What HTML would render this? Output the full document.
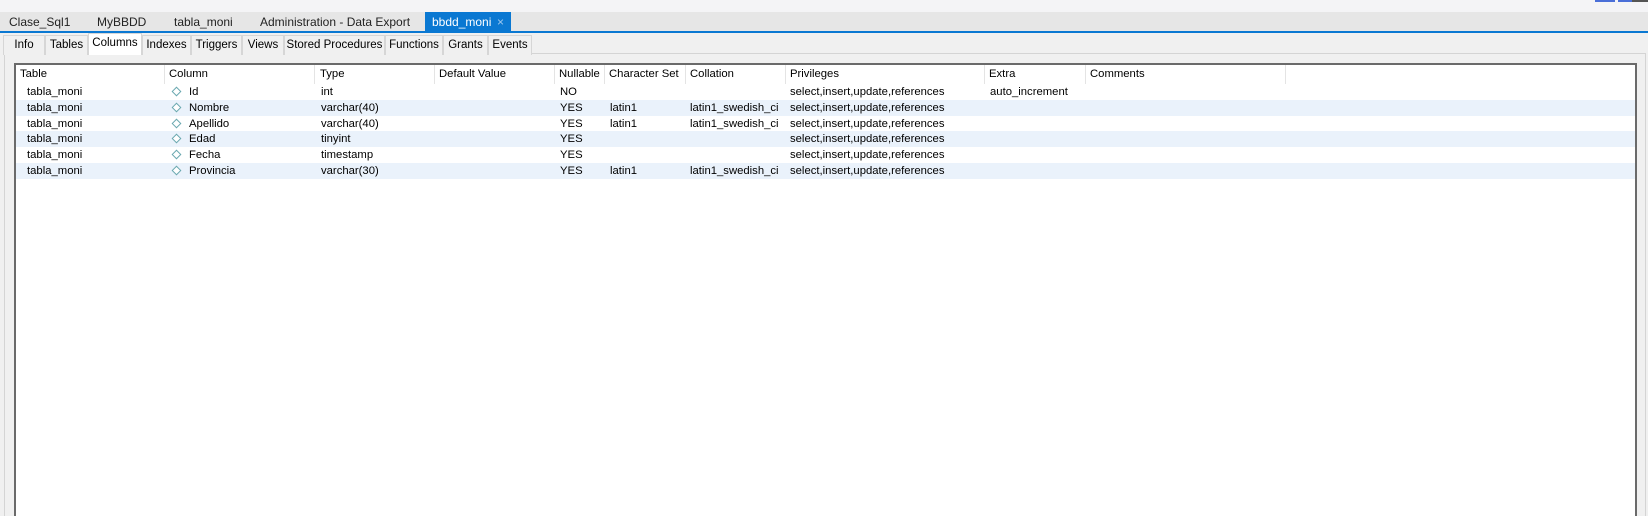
<!DOCTYPE html>
<html style="height:516px;overflow:hidden"><head><meta charset="utf-8"><style>
*{margin:0;padding:0;box-sizing:border-box}
body{width:1648px;height:516px;overflow:hidden;background:#f0f0f0;font-family:"Liberation Sans",sans-serif;font-size:12px;color:#000;position:relative}
.a{position:absolute;white-space:nowrap}
.top{left:0;top:0;width:1648px;height:12px;background:#f4f4f6}
.strip{left:0;top:12px;width:1648px;height:20px;background:#e6e6e6}
.blue{left:0;top:31px;width:1648px;height:2px;background:#0a78d2}
.tab{top:13px;line-height:18px;font-size:12px;color:#222}
.sub{top:35px;height:20px;line-height:18px;border:1px solid #d6d6d6;border-bottom:none;background:#f0f0f0;text-align:center;font-size:11.5px}
.panel{left:4px;top:53px;width:1642px;height:470px;border:1px solid #d4d4d4;background:#f0f0f0}
.grid{left:14px;top:63px;width:1623px;height:460px;border:2px solid #6a6a6a;border-bottom:none;background:#fff}
.sep{top:65px;width:1px;height:19px;background:#e4e4e4}
.row{left:16px;width:1619px;height:16px}
.c{line-height:16px;font-size:11.3px}
.dm{width:7px;height:7px;border:1px solid #6aa8b0;transform:rotate(45deg);background:#fff}
</style></head><body>
<div class="a top"></div>
<div class="a" style="left:1618px;top:0;width:20px;height:2px;background:#4a6fd8"></div>
<div class="a" style="left:1595px;top:0;width:20px;height:2px;background:#4a6fd8"></div>
<div class="a" style="left:1632px;top:0;width:16px;height:2px;background:#555"></div>
<div class="a strip"></div>
<div class="a" style="left:425px;top:12px;width:86px;height:20px;background:#0a78d2"></div>
<div class="a blue"></div>
<div class="a tab" style="left:9px">Clase_Sql1</div>
<div class="a tab" style="left:97px">MyBBDD</div>
<div class="a tab" style="left:174px">tabla_moni</div>
<div class="a tab" style="left:260px">Administration - Data Export</div>
<div class="a tab" style="left:432px;color:#fff">bbdd_moni</div>
<div class="a tab" style="left:497px;color:#9ec8ee">×</div>
<div class="a panel"></div>
<div class="a sub" style="left:3px;width:42px">Info</div>
<div class="a sub" style="left:45px;width:43px">Tables</div>
<div class="a sub" style="left:88px;width:54px;top:33px;height:22px;background:#fff;line-height:18px">Columns</div>
<div class="a sub" style="left:142px;width:49px">Indexes</div>
<div class="a sub" style="left:191px;width:51px">Triggers</div>
<div class="a sub" style="left:242px;width:42px">Views</div>
<div class="a sub" style="left:284px;width:101px">Stored Procedures</div>
<div class="a sub" style="left:385px;width:58px">Functions</div>
<div class="a sub" style="left:443px;width:45px">Grants</div>
<div class="a sub" style="left:488px;width:44px">Events</div>
<div class="a grid"></div>
<div class="a c" style="left:20px;top:66px">Table</div>
<div class="a c" style="left:169px;top:66px">Column</div>
<div class="a c" style="left:320px;top:66px">Type</div>
<div class="a c" style="left:439px;top:66px">Default Value</div>
<div class="a c" style="left:559px;top:66px">Nullable</div>
<div class="a c" style="left:609px;top:66px">Character Set</div>
<div class="a c" style="left:690px;top:66px">Collation</div>
<div class="a c" style="left:790px;top:66px">Privileges</div>
<div class="a c" style="left:989px;top:66px">Extra</div>
<div class="a c" style="left:1090px;top:66px">Comments</div>
<div class="a sep" style="left:164px"></div><div class="a sep" style="left:314px"></div><div class="a sep" style="left:434px"></div><div class="a sep" style="left:554px"></div><div class="a sep" style="left:604px"></div><div class="a sep" style="left:685px"></div><div class="a sep" style="left:785px"></div><div class="a sep" style="left:984px"></div><div class="a sep" style="left:1085px"></div><div class="a sep" style="left:1285px"></div>

<div class="a row" style="top:100px;background:#eaf2fb"></div>
<div class="a row" style="top:131px;background:#eaf2fb"></div>
<div class="a row" style="top:163px;background:#eaf2fb"></div>

<div class="a c" style="left:27px;top:84px">tabla_moni</div><div class="a dm" style="left:173px;top:88px"></div><div class="a c" style="left:189px;top:84px">Id</div><div class="a c" style="left:321px;top:84px">int</div><div class="a c" style="left:560px;top:84px">NO</div><div class="a c" style="left:790px;top:84px">select,insert,update,references</div><div class="a c" style="left:990px;top:84px">auto_increment</div>

<div class="a c" style="left:27px;top:100px">tabla_moni</div><div class="a dm" style="left:173px;top:104px"></div><div class="a c" style="left:189px;top:100px">Nombre</div><div class="a c" style="left:321px;top:100px">varchar(40)</div><div class="a c" style="left:560px;top:100px">YES</div><div class="a c" style="left:610px;top:100px">latin1</div><div class="a c" style="left:690px;top:100px;width:89px;overflow:hidden">latin1_swedish_ci</div><div class="a c" style="left:790px;top:100px">select,insert,update,references</div>

<div class="a c" style="left:27px;top:116px">tabla_moni</div><div class="a dm" style="left:173px;top:120px"></div><div class="a c" style="left:189px;top:116px">Apellido</div><div class="a c" style="left:321px;top:116px">varchar(40)</div><div class="a c" style="left:560px;top:116px">YES</div><div class="a c" style="left:610px;top:116px">latin1</div><div class="a c" style="left:690px;top:116px;width:89px;overflow:hidden">latin1_swedish_ci</div><div class="a c" style="left:790px;top:116px">select,insert,update,references</div>

<div class="a c" style="left:27px;top:131px">tabla_moni</div><div class="a dm" style="left:173px;top:135px"></div><div class="a c" style="left:189px;top:131px">Edad</div><div class="a c" style="left:321px;top:131px">tinyint</div><div class="a c" style="left:560px;top:131px">YES</div><div class="a c" style="left:790px;top:131px">select,insert,update,references</div>

<div class="a c" style="left:27px;top:147px">tabla_moni</div><div class="a dm" style="left:173px;top:151px"></div><div class="a c" style="left:189px;top:147px">Fecha</div><div class="a c" style="left:321px;top:147px">timestamp</div><div class="a c" style="left:560px;top:147px">YES</div><div class="a c" style="left:790px;top:147px">select,insert,update,references</div>

<div class="a c" style="left:27px;top:163px">tabla_moni</div><div class="a dm" style="left:173px;top:167px"></div><div class="a c" style="left:189px;top:163px">Provincia</div><div class="a c" style="left:321px;top:163px">varchar(30)</div><div class="a c" style="left:560px;top:163px">YES</div><div class="a c" style="left:610px;top:163px">latin1</div><div class="a c" style="left:690px;top:163px;width:89px;overflow:hidden">latin1_swedish_ci</div><div class="a c" style="left:790px;top:163px">select,insert,update,references</div>
</body></html>
